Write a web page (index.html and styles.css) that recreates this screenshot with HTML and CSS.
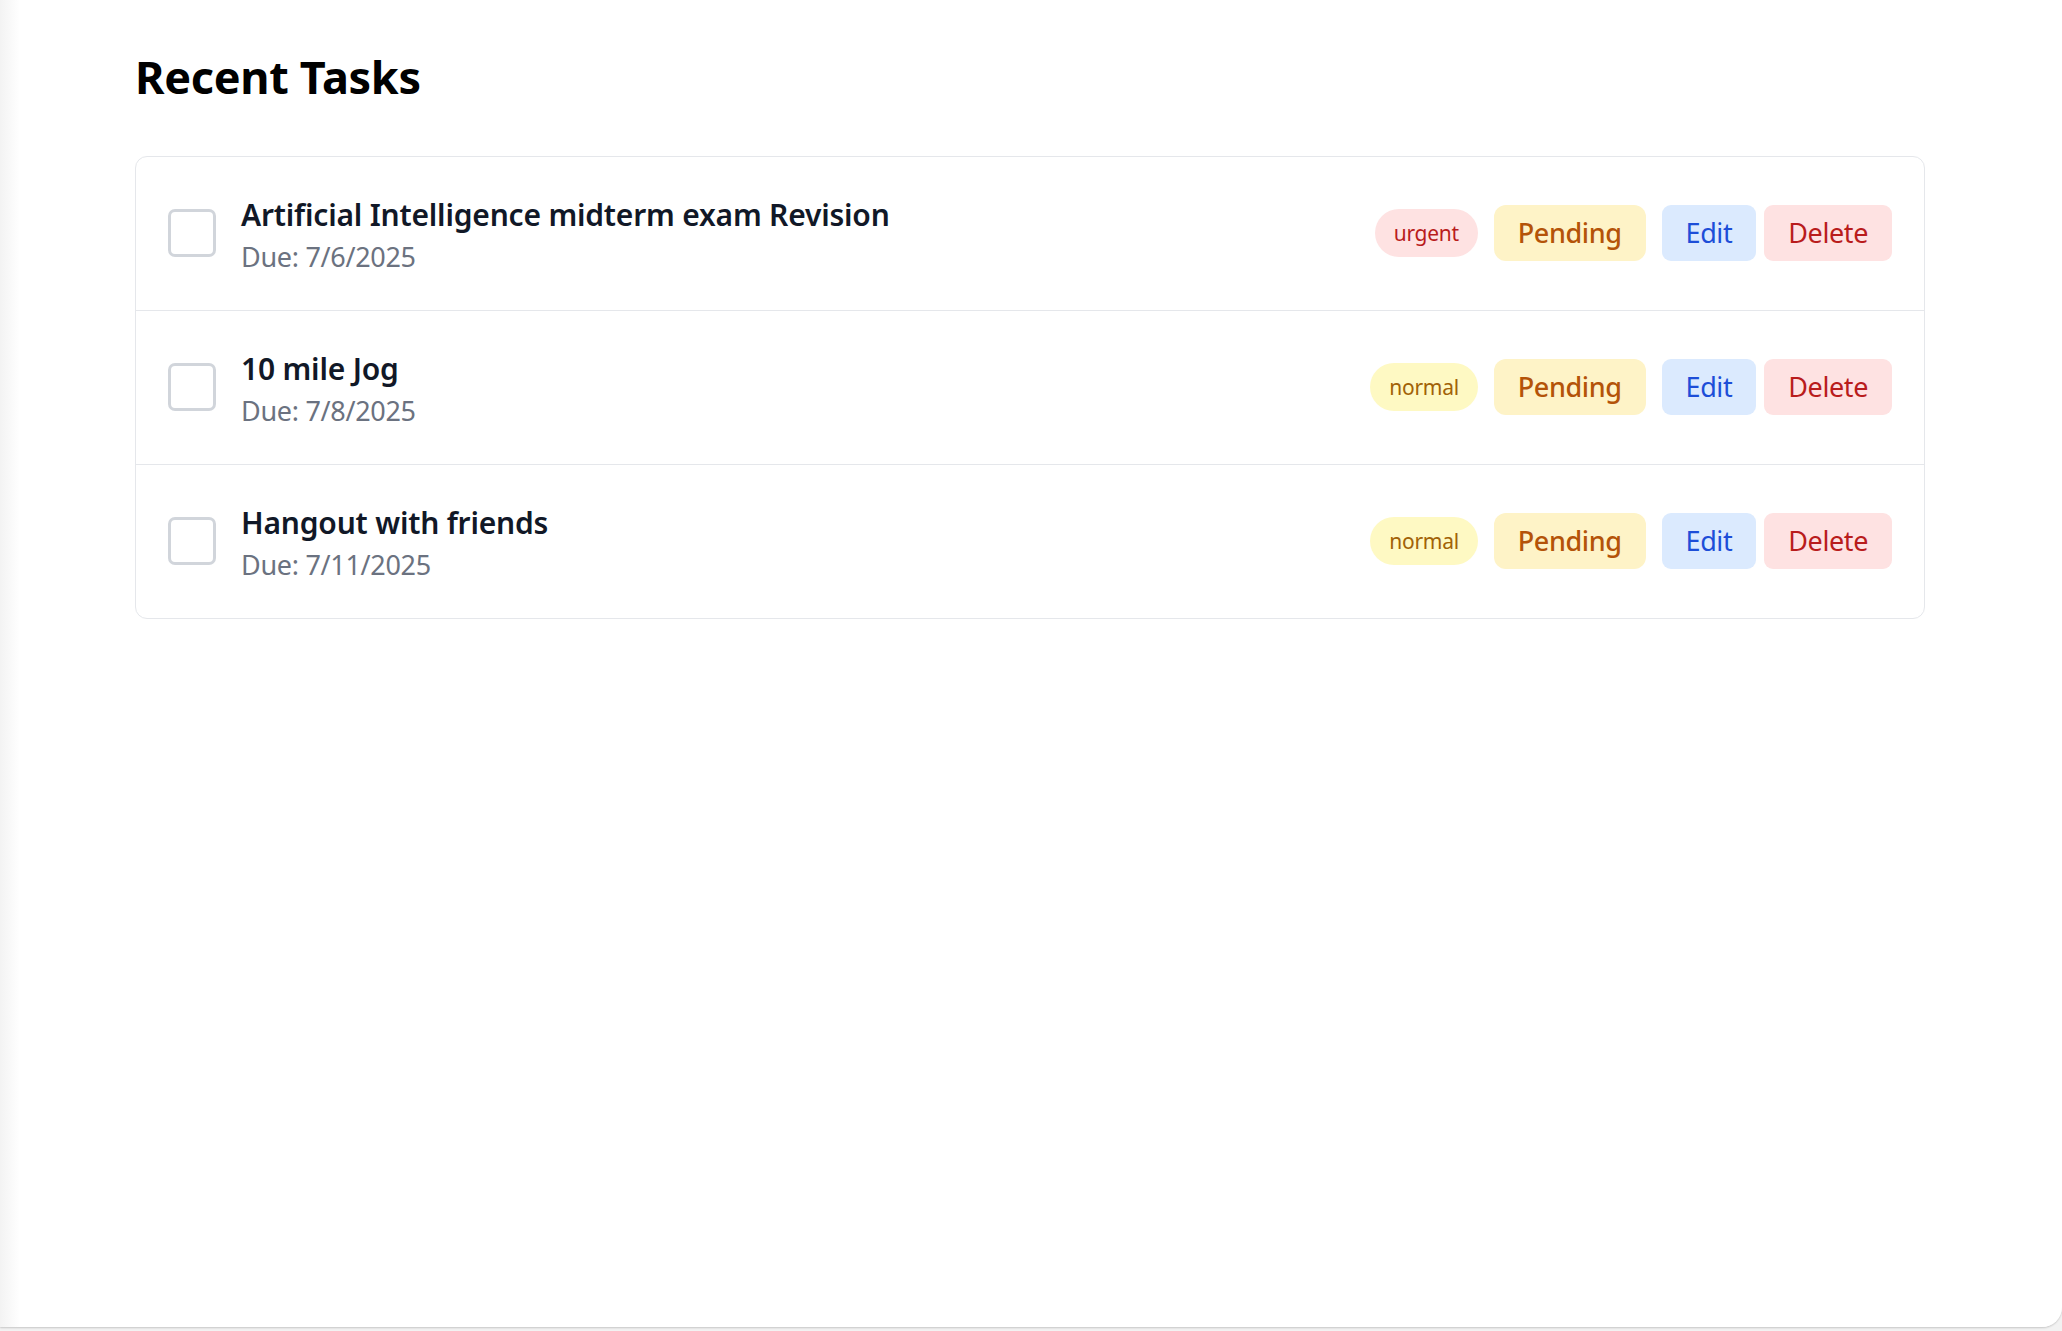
FILE: index.html
```html
<!DOCTYPE html>
<html lang="en">
<head>
<meta charset="utf-8">
<title>Recent Tasks</title>
<link rel="stylesheet" href="styles.css">
</head>
<body>
<main class="panel">
  <h2 class="heading">Recent Tasks</h2>
  <ul class="task-list">
    <li class="task">
      <span class="check"></span>
      <div class="task-info">
        <div class="task-title">Artificial Intelligence midterm exam Revision</div>
        <div class="task-due">Due: 7/6/2025</div>
      </div>
      <div class="task-actions">
        <span class="badge badge-urgent">urgent</span>
        <span class="status">Pending</span>
        <div class="btns">
          <button class="btn btn-edit">Edit</button>
          <button class="btn btn-delete">Delete</button>
        </div>
      </div>
    </li>
    <li class="task">
      <span class="check"></span>
      <div class="task-info">
        <div class="task-title">10 mile Jog</div>
        <div class="task-due">Due: 7/8/2025</div>
      </div>
      <div class="task-actions">
        <span class="badge badge-normal">normal</span>
        <span class="status">Pending</span>
        <div class="btns">
          <button class="btn btn-edit">Edit</button>
          <button class="btn btn-delete">Delete</button>
        </div>
      </div>
    </li>
    <li class="task">
      <span class="check"></span>
      <div class="task-info">
        <div class="task-title">Hangout with friends</div>
        <div class="task-due">Due: 7/11/2025</div>
      </div>
      <div class="task-actions">
        <span class="badge badge-normal">normal</span>
        <span class="status">Pending</span>
        <div class="btns">
          <button class="btn btn-edit">Edit</button>
          <button class="btn btn-delete">Delete</button>
        </div>
      </div>
    </li>
  </ul>
</main>
</body>
</html>
```
FILE: styles.css
```css
* { box-sizing: border-box; }
html, body { margin: 0; padding: 0; }
body {
  background: #f2f2f2;
  font-family: "Noto Sans", "Open Sans", "Liberation Sans", sans-serif;
  color: #111827;
  height: 1331px;
  overflow: hidden;
}
.panel {
  height: 1327px;
  background: linear-gradient(to right, #f3f3f3 0px, #ffffff 20px);
  border-bottom-right-radius: 20px;
  box-shadow: 0 1px 2px rgba(0, 0, 0, 0.18);
  padding: 50px 137px 0 135px;
}
.heading {
  margin: 0 0 52px 0;
  font-size: 45px;
  line-height: 54px;
  font-weight: 700;
  color: #000;
  letter-spacing: -0.3px;
}
.task-list {
  list-style: none;
  margin: 0;
  padding: 0;
  border: 1px solid #e5e7eb;
  border-radius: 12px;
  background: #fff;
}
.task {
  display: flex;
  align-items: center;
  padding: 31px 32px 32px 32px;
  border-bottom: 1px solid #e5e7eb;
}
.task:last-child { border-bottom: none; }
.check {
  width: 48px;
  height: 48px;
  border: 3px solid #d1d5db;
  border-radius: 7px;
  flex: none;
  margin-right: 25px;
}
.task-info {
  flex: 1;
  min-width: 0;
  padding-top: 6px;
}
.task-title {
  font-size: 30px;
  line-height: 42px;
  font-weight: 600;
  color: #111827;
  letter-spacing: -0.2px;
}
.task-due {
  font-size: 27px;
  line-height: 42px;
  color: #6b7280;
  letter-spacing: -0.3px;
}
.task-actions {
  display: flex;
  align-items: center;
  gap: 16px;
}
.badge {
  display: inline-block;
  font-size: 21px;
  line-height: 30px;
  padding: 9px 19px;
  border-radius: 999px;
  letter-spacing: -0.3px;
}
.badge-urgent { background: #fee2e2; color: #b91c1c; }
.badge-normal { background: #fef9c3; color: #a16207; }
.status {
  display: inline-block;
  font-size: 27px;
  line-height: 40px;
  padding: 8px 24px;
  border-radius: 12px;
  background: #fef3c7;
  color: #b45309;
  font-weight: 500;
  letter-spacing: -0.4px;
}
.btns {
  display: flex;
  gap: 8px;
}
.btn {
  font-family: inherit;
  font-size: 27px;
  line-height: 40px;
  padding: 8px 24px;
  border: none;
  border-radius: 9px;
  cursor: pointer;
  letter-spacing: -0.4px;
}
.btn-edit { background: #dbeafe; color: #1d4ed8; }
.btn-delete { background: #fee2e2; color: #b91c1c; }
```
